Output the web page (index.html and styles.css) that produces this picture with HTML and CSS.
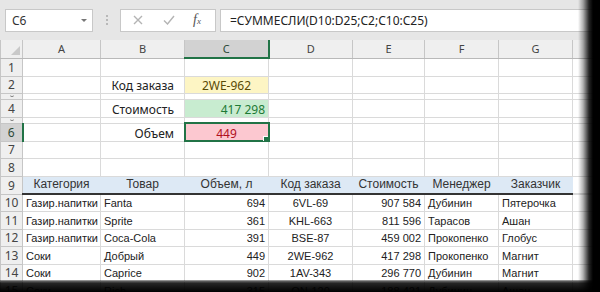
FILE: index.html
```html
<!DOCTYPE html>
<html>
    <head>
        <meta charset="utf-8">
        <title>СУММЕСЛИ</title>
        <link rel="stylesheet" href="styles.css">
    </head>
    <body>
        <div class="formula-bar">
            <div class="name-box">C6<span class="caret"></span></div>
            <div class="grip"><i></i><i></i><i></i></div>
            <div class="fx-box">
                <svg width="10" height="10" viewBox="0 0 10 10"><path d="M1 1L9 9M9 1L1 9" stroke="#b4b4b4" stroke-width="1.4" fill="none"/></svg>
                <svg width="12" height="10" viewBox="0 0 12 10"><path d="M1 5.5L4.5 9L11 1" stroke="#b4b4b4" stroke-width="1.4" fill="none"/></svg>
                <span class="fx">f<small>x</small></span>
            </div>
            <div class="formula">=СУММЕСЛИ(D10:D25;C2;C10:C25)</div>
        </div>
        <table class="sheet">
            <colgroup>
                <col class="w-rh"><col class="w-a"><col class="w-b"><col class="w-c"><col class="w-d"><col class="w-e"><col class="w-f"><col class="w-g"><col>
            </colgroup>
            <tr class="cols">
                <th class="corner"><svg width="9" height="9" viewBox="0 0 9 9"><path d="M9 0V9H0Z" fill="#c9c9c9"/></svg></th>
                <th>A</th><th>B</th><th class="sel">C</th><th>D</th><th>E</th><th>F</th><th>G</th><th></th>
            </tr>
            <tr class="r18"><th>1</th><td></td><td></td><td></td><td></td><td></td><td></td><td></td><td></td></tr>
            <tr class="r17"><th>2</th><td></td><td class="label">Код заказа</td><td class="key">2WE-962</td><td></td><td></td><td></td><td></td><td></td></tr>
            <tr class="thin"><th><span class="mark"></span></th><td></td><td></td><td></td><td></td><td></td><td></td><td></td><td></td></tr>
            <tr class="r18"><th>4</th><td></td><td class="label">Стоимость</td><td class="sum">417 298</td><td></td><td></td><td></td><td></td><td></td></tr>
            <tr class="thin"><th><span class="mark"></span></th><td></td><td></td><td></td><td></td><td></td><td></td><td></td><td></td></tr>
            <tr class="r18"><th class="sel">6</th><td></td><td class="label">Объем</td><td class="vol active">449</td><td></td><td></td><td></td><td></td><td></td></tr>
            <tr class="r17"><th>7</th><td></td><td></td><td></td><td></td><td></td><td></td><td></td><td></td></tr>
            <tr class="r18"><th>8</th><td></td><td></td><td></td><td></td><td></td><td></td><td></td><td></td></tr>
            <tr class="head"><th>9</th><td>Категория</td><td>Товар</td><td>Объем, л</td><td>Код заказа</td><td>Стоимость</td><td>Менеджер</td><td>Заказчик</td><td class="blank"></td></tr>
            <tr class="data"><th>10</th><td>Газир.напитки</td><td>Fanta</td><td class="num">694</td><td class="mid">6VL-69</td><td class="num">907 584</td><td>Дубинин</td><td>Пятерочка</td><td></td></tr>
            <tr class="data"><th>11</th><td>Газир.напитки</td><td>Sprite</td><td class="num">361</td><td class="mid">KHL-663</td><td class="num">811 596</td><td>Тарасов</td><td>Ашан</td><td></td></tr>
            <tr class="data"><th>12</th><td>Газир.напитки</td><td>Coca-Cola</td><td class="num">391</td><td class="mid">BSE-87</td><td class="num">459 002</td><td>Прокопенко</td><td>Глобус</td><td></td></tr>
            <tr class="data"><th>13</th><td>Соки</td><td>Добрый</td><td class="num">449</td><td class="mid">2WE-962</td><td class="num">417 298</td><td>Прокопенко</td><td>Магнит</td><td></td></tr>
            <tr class="data"><th>14</th><td>Соки</td><td>Caprice</td><td class="num">902</td><td class="mid">1AV-343</td><td class="num">296 770</td><td>Дубинин</td><td>Магнит</td><td></td></tr>
            <tr class="data"><th>15</th><td>Соки</td><td>Rich</td><td class="num">315</td><td class="mid">QN-120</td><td class="num">188 421</td><td>Дубинин</td><td>Ашан</td><td></td></tr>
        </table>
        <div class="shade-right"></div>
        <div class="shade-bottom"></div>
    </body>
</html>
```

FILE: styles.css
```css
*{box-sizing:border-box;}
body{
    margin:0;
    width:600px;
    height:292px;
    overflow:hidden;
    position:relative;
    background:#fff;
    font-family:"Liberation Sans", Arial, sans-serif;
    color:#222;
}

/* formula bar */
.formula-bar{height:40px; background:#e6e6e6; display:flex; align-items:center; padding:0 0 0 5px; font-family:"Noto Sans", sans-serif;}
.name-box{width:88px; height:23px; background:#fff; border:1px solid #c8c8c8; display:flex; align-items:center; padding-left:6px; font-size:12px; color:#333; position:relative;}
.caret{margin-left:auto; margin-right:5px; border-left:3px solid transparent; border-right:3px solid transparent; border-top:3px solid #777;}
.grip{width:27px; display:flex; flex-direction:column; align-items:center; gap:2px;}
.grip i{width:2px; height:2px; background:#b8b8b8;}
.fx-box{width:96px; height:23px; background:#fff; border:1px solid #c8c8c8; display:flex; align-items:center; padding-left:12px; gap:20px;}
.fx{font-family:"Liberation Serif", serif; font-style:italic; font-size:14px; color:#555; margin-left:-2px;}
.fx small{font-size:9px;}
.formula{flex:1; height:23px; margin-left:4px; background:#fff; border:1px solid #c8c8c8; display:flex; align-items:center; padding-left:9px; font-size:12px; color:#222;}

/* sheet */
.sheet{width:600px; table-layout:fixed; border-collapse:collapse; font-size:11px;}
.w-rh{width:22px;} .w-a{width:78px;} .w-b{width:84px;} .w-c{width:84px;} .w-d{width:84px;}
.w-e{width:72px;} .w-f{width:74px;} .w-g{width:74px;}
.sheet td, .sheet th{padding:0 3px; border:1px solid #dadada; white-space:nowrap; overflow:hidden; vertical-align:bottom; line-height:15px;}
.sheet th{background:#efefef; color:#444; font-weight:normal; font-family:"Noto Sans", sans-serif; font-size:11px; padding:0; text-align:center; border-color:#c6c6c6;}
.sheet tr > th:first-child{vertical-align:middle; font-size:12px;}
.sheet .cols th{height:18px; vertical-align:middle; border-top:none; border-bottom-color:#b9b9b9;}
.sheet .cols th.sel{background:#d2d2d2; color:#2c4a38; border-bottom:2px solid #217346;}
.sheet .corner svg{display:block; margin:4px 2px 0 auto;}
.r18{height:18px;} .r17{height:17px;}
.thin{height:6px;}
.sheet .thin th{line-height:0; vertical-align:top;}
.mark{display:block; width:4px; height:2px; margin:0 auto; border-bottom:1px solid #777; border-radius:0 0 2px 2px;}
.sheet tr > th.sel{background:#d2d2d2; color:#2c4a38; border-right:2px solid #217346;}

.label{text-align:right; padding-right:10px !important; font-family:"Noto Sans", sans-serif; font-size:12px;}
.key{background:#fdf5c4; color:#5a4a05; text-align:center; font-family:"Noto Sans", sans-serif; font-size:12px;}
.sum{background:#c8ecd0; color:#1d7a35; text-align:right; font-family:"Noto Sans", sans-serif; font-size:12px;}
.vol{background:#fcc8d0; color:#b0101c; text-align:center; font-family:"Noto Sans", sans-serif; font-size:12px;}
.active{position:relative; outline:2px solid #217346; outline-offset:-1px;}
.active::after{content:""; position:absolute; right:-3px; bottom:-3px; width:6px; height:6px; background:#217346; border:1px solid #fff;}

.head{height:18px;}
.head td{background:#dde9f5; text-align:center; font-size:12px; color:#333; border-color:#dde9f5; border-bottom:2px solid #333; vertical-align:middle;}
.head td.blank{background:#fff; border-color:#dadada;}
.data{height:17.5px;}
.data td{font-size:11px;}
.num{text-align:right;}
.mid{text-align:center;}

/* torn screenshot shadow */
.shade-right{position:absolute; top:0; right:0; width:22px; height:100%; background:linear-gradient(to right, rgba(0,0,0,0), rgba(0,0,0,.3) 5px, rgba(0,0,0,.85) 11px, #000 15px);}
.shade-bottom{position:absolute; left:0; bottom:0; width:100%; height:12px; background:linear-gradient(rgba(0,0,0,.35), rgba(0,0,0,.85) 3px, #000);}
```
